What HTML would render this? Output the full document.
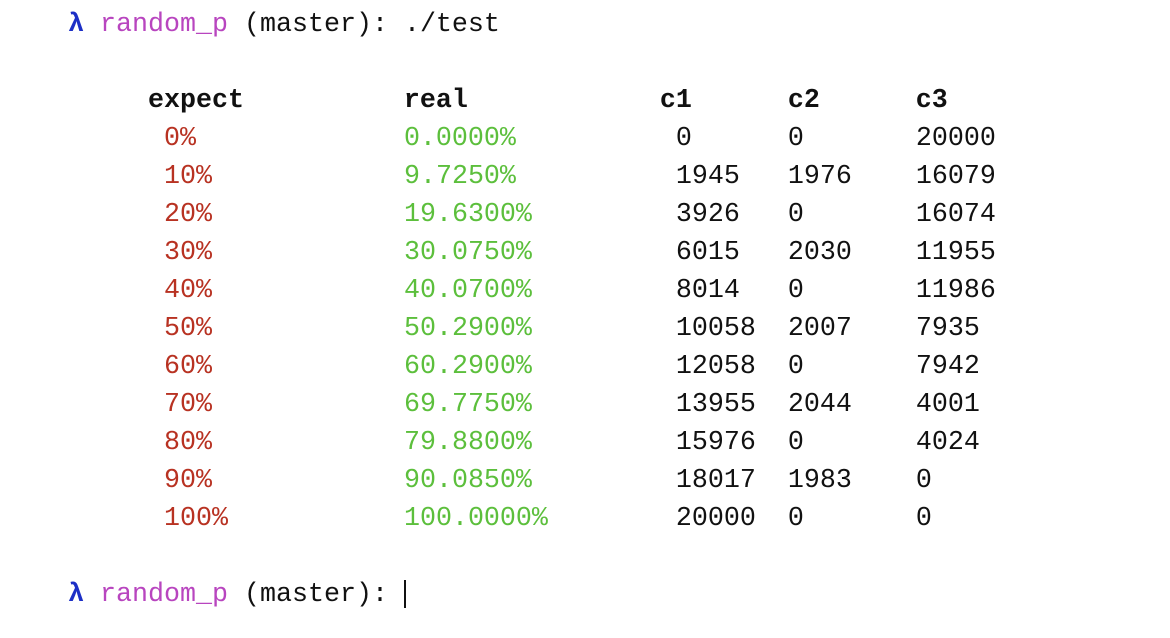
<!DOCTYPE html>
<html><head><style>
html,body{margin:0;padding:0;background:#fff;width:1170px;height:638px;overflow:hidden}
pre{position:absolute;left:68px;top:6px;margin:0;font-family:"Liberation Mono",monospace;font-size:26.67px;line-height:38px;color:#111}
.b{color:#1d2fc6;font-weight:bold}.p{color:#b845bf}.r{color:#b83222}.g{color:#5cbf3c}.h{font-weight:bold}
.cur{display:inline-block;width:2px;height:28px;background:#111;vertical-align:middle}
</style></head><body>
<pre><span class="b">λ</span> <span class="p">random_p</span> (master): ./test

     <span class="h">expect          real            c1      c2      c3</span>
      <span class="r">0%</span>             <span class="g">0.0000%</span>          0      0       20000
      <span class="r">10%</span>            <span class="g">9.7250%</span>          1945   1976    16079
      <span class="r">20%</span>            <span class="g">19.6300%</span>         3926   0       16074
      <span class="r">30%</span>            <span class="g">30.0750%</span>         6015   2030    11955
      <span class="r">40%</span>            <span class="g">40.0700%</span>         8014   0       11986
      <span class="r">50%</span>            <span class="g">50.2900%</span>         10058  2007    7935
      <span class="r">60%</span>            <span class="g">60.2900%</span>         12058  0       7942
      <span class="r">70%</span>            <span class="g">69.7750%</span>         13955  2044    4001
      <span class="r">80%</span>            <span class="g">79.8800%</span>         15976  0       4024
      <span class="r">90%</span>            <span class="g">90.0850%</span>         18017  1983    0
      <span class="r">100%</span>           <span class="g">100.0000%</span>        20000  0       0

<span class="b">λ</span> <span class="p">random_p</span> (master): <span class="cur"></span></pre>
</body></html>
